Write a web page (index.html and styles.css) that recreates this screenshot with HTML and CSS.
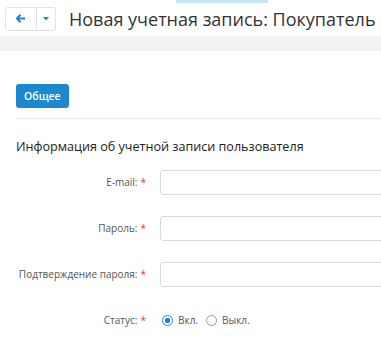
FILE: index.html
```html
<!DOCTYPE HTML>
<html>
<head>
    <title>Новая учетная запись: Покупатель</title>
    <meta name="viewport" content="width=device-width, initial-scale=1">
	<meta http-equiv="content-type" content="text/html; charset=utf-8">
	<link rel="stylesheet" href="styles.css">
</head>
<body>
	<div class="top-strip"></div>
	<div id="header">
	  <div class="btn-group">
		<a class="btn-nav" href="#back">
		  <svg width="10" height="9" viewBox="0 0 10 9"><path d="M4.5 0.8 L1 4.5 L4.5 8.2 M1 4.5 H9" stroke="#1a8ad0" stroke-width="2" fill="none"/></svg>
		</a>
		<a class="btn-nav btn-caret" href="#menu">
		  <svg width="6" height="4" viewBox="0 0 6 4"><path d="M0 0 H6 L3 3.5 Z" fill="#1a8ad0"/></svg>
		</a>
	  </div>
	  <h1 class="title">Новая учетная запись: Покупатель</h1>
	</div>
	<div class="band"></div>

	<div class="content">
	  <div class="tabs">
		<a class="tab active" href="#general">Общее</a>
	  </div>

	  <h2 class="section-title">Информация об учетной записи пользователя</h2>

	  <div class="form-row">
		<label class="form-label">E-mail:<span class="req">*</span></label>
		<input class="form-input" type="text">
	  </div>
	  <div class="form-row">
		<label class="form-label">Пароль:<span class="req">*</span></label>
		<input class="form-input" type="password">
	  </div>
	  <div class="form-row">
		<label class="form-label">Подтверждение пароля:<span class="req">*</span></label>
		<input class="form-input" type="password">
	  </div>
	  <div class="form-row">
		<label class="form-label">Статус:<span class="req">*</span></label>
		<div class="radios">
		  <label class="radio"><span class="dot checked"></span>Вкл.</label>
		  <label class="radio"><span class="dot"></span>Выкл.</label>
		</div>
	  </div>
	</div>
</body>
</html>
```

FILE: styles.css
```css
* {box-sizing: border-box;}

body {
  margin: 0;
  font-family: "Open Sans", Arial, sans-serif;
  color: #333;
  background: #fff;
  overflow: hidden;
}

.top-strip {
  margin-left: 176px;
  width: 92px;
  height: 3px;
  background-color: #c6e6f5;
}

#header {
  display: flex;
  align-items: center;
  height: 33px;
  padding: 0 0 2px 5px;
}

.btn-group {
  display: flex;
  flex-shrink: 0;
}

.btn-nav {
  display: flex;
  align-items: center;
  justify-content: center;
  width: 32px;
  height: 24px;
  border: 1px solid #dfe3e6;
  border-radius: 3px 0 0 3px;
  background: #fff;
}

.btn-caret {
  width: 19px;
  border-left: none;
  border-radius: 0 3px 3px 0;
}

.title {
  margin: 0 0 0 13px;
  font-size: 18px;
  font-weight: normal;
  color: #333;
  white-space: nowrap;
}

.band {
  height: 15px;
  background-color: #f2f3f4;
}

.content {
  padding: 33px 0 0 16px;
}

.tabs {
  display: flex;
  border-bottom: 1px solid #e6e8ea;
  padding-bottom: 10px;
}

.tab {
  height: 24px;
  line-height: 24px;
  padding: 0 8px;
  font-size: 10.5px;
  font-weight: 600;
  color: #fff;
  background-color: #1b88cf;
  border-radius: 3px;
  text-decoration: none;
}

.section-title {
  margin: 19px 0 3px 0;
  font-size: 12.6px;
  line-height: 18px;
  font-weight: normal;
  color: #222;
  white-space: nowrap;
}

.form-row {
  display: flex;
  align-items: center;
  height: 46px;
}

.form-label {
  width: 130px;
  flex-shrink: 0;
  text-align: right;
  font-size: 10px;
  color: #555;
  white-space: nowrap;
}

.req {
  color: #d23c4c;
  margin-left: 3px;
}

.form-input {
  margin-left: 14px;
  width: 260px;
  height: 25px;
  border: 1px solid #d8dbde;
  border-radius: 3px;
  flex-shrink: 0;
}

.radios {
  display: flex;
  margin-left: 16px;
  gap: 8px;
}

.radio {
  display: flex;
  align-items: center;
  font-size: 10px;
  color: #555;
}

.dot {
  width: 11px;
  height: 11px;
  border: 1px solid #999;
  border-radius: 50%;
  margin-right: 5px;
  background: #fff;
}

.dot.checked {
  border-color: #1b88cf;
  background: radial-gradient(circle, #1b88cf 0 2.6px, #fff 3px);
}
```
